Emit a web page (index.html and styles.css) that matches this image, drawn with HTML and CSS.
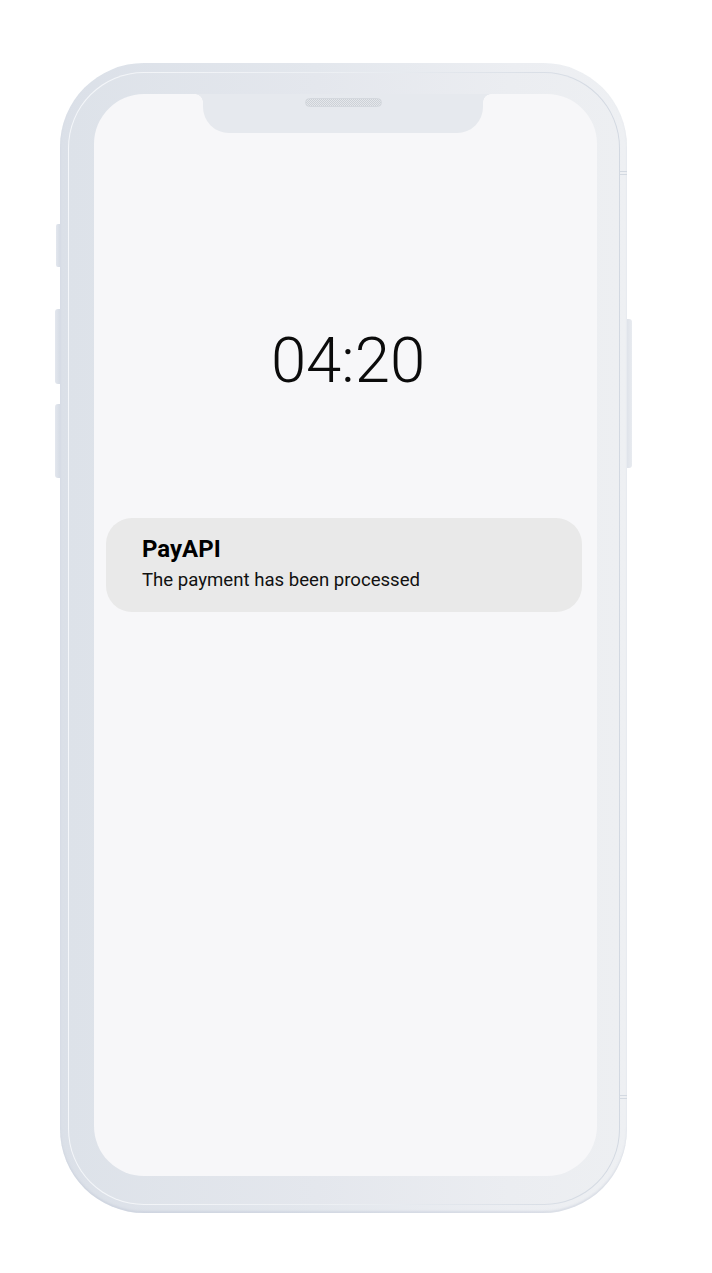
FILE: index.html
```html
<!DOCTYPE html>
<html lang="en">
<head>
<meta charset="utf-8">
<title>PayAPI notification</title>
<link rel="stylesheet" href="styles.css">
</head>
<body>
<div class="phone">
  <span class="side-btn btn-mute"></span>
  <span class="side-btn btn-vol-up"></span>
  <span class="side-btn btn-vol-down"></span>
  <span class="side-btn btn-power"></span>
  <span class="antenna antenna-top"></span>
  <span class="antenna antenna-bottom"></span>
  <div class="frame">
    <div class="ring"></div>
    <div class="screen">
      <div class="notch"><span class="speaker"></span></div>
      <div class="time">04:20</div>
      <div class="card">
        <div class="card-title">PayAPI</div>
        <div class="card-text">The payment has been processed</div>
      </div>
    </div>
  </div>
</div>
</body>
</html>
```

FILE: styles.css
```css
html, body {
  margin: 0;
  padding: 0;
  background: #ffffff;
}

body {
  font-family: Roboto, "Liberation Sans", sans-serif;
  width: 712px;
  height: 1273px;
  overflow: hidden;
}

.phone {
  position: relative;
  margin: 63px 0 0 60px;
  width: 567px;
  height: 1150px;
}

.frame {
  position: relative;
  box-sizing: border-box;
  width: 100%;
  height: 100%;
  border-radius: 84px;
  padding: 31px 30px 37px 34px;
  background: linear-gradient(90deg, #dbe0e8 0%, #e3e7ed 45%, #eceef2 80%, #eef0f3 100%);
  box-shadow: inset 0 -2px 2px rgba(180, 190, 205, 0.35);
}

.ring {
  position: absolute;
  top: 9px;
  right: 7px;
  bottom: 8px;
  left: 8px;
  border-radius: 76px;
  background: linear-gradient(90deg, #f5f7fa 0%, #eceff3 50%, #d2d8e1 100%);
}

.ring::after {
  content: "";
  position: absolute;
  inset: 1px;
  border-radius: 75px;
  background: linear-gradient(90deg, #dde2e9 0%, #e4e7ed 45%, #ebedf1 80%, #edeff2 100%);
}

.screen {
  position: relative;
  z-index: 1;
  box-sizing: border-box;
  height: 100%;
  border-radius: 50px;
  background: #f7f7f9;
  display: flex;
  flex-direction: column;
  align-items: flex-start;
  padding-top: 235px;
}

.notch {
  position: absolute;
  top: 0;
  left: 109px;
  width: 280px;
  height: 39px;
  background: #e6e9ee;
  border-radius: 0 0 26px 26px;
}

.notch::before,
.notch::after {
  content: "";
  position: absolute;
  top: 0;
  width: 8px;
  height: 8px;
}

.notch::before {
  left: -8px;
  background: radial-gradient(circle at 0 100%, transparent 7.5px, #e6e9ee 8px);
}

.notch::after {
  right: -8px;
  background: radial-gradient(circle at 100% 100%, transparent 7.5px, #e6e9ee 8px);
}

.speaker {
  position: absolute;
  top: 4px;
  left: 102px;
  width: 77px;
  height: 9px;
  box-sizing: border-box;
  border-radius: 5px;
  border: 1px solid #d4d8de;
  background-color: #e4e7eb;
  background-image:
    linear-gradient(45deg, #cdd1d7 25%, transparent 25%, transparent 75%, #cdd1d7 75%),
    linear-gradient(45deg, #cdd1d7 25%, transparent 25%, transparent 75%, #cdd1d7 75%);
  background-size: 2px 2px;
  background-position: 0 0, 1px 1px;
}

.time {
  align-self: center;
  margin-left: 5px;
  font-family: Roboto, "Liberation Sans", sans-serif;
  font-weight: 300;
  font-size: 63.5px;
  line-height: 1;
  color: #0b0b0b;
  letter-spacing: 0;
}

.card {
  box-sizing: border-box;
  margin: 125.5px 0 0 12px;
  width: 476px;
  height: 94px;
  border-radius: 26px;
  background: #e9e9e9;
  padding: 18px 0 0 36px;
  color: #000000;
}

.card-title {
  font-weight: 700;
  font-size: 24px;
  line-height: 26px;
}

.card-text {
  margin-top: 6px;
  font-weight: 400;
  font-size: 18.6px;
  line-height: 25px;
  color: #111111;
}

.side-btn {
  position: absolute;
  width: 4px;
  background: linear-gradient(90deg, #e3e7ee, #d6dce5);
}

.btn-mute {
  left: -4px;
  top: 161px;
  height: 43px;
  border-radius: 2px 0 0 2px;
}

.btn-vol-up {
  left: -5px;
  width: 5px;
  top: 246px;
  height: 75px;
  border-radius: 3px 0 0 3px;
}

.btn-vol-down {
  left: -5px;
  width: 5px;
  top: 341px;
  height: 74px;
  border-radius: 3px 0 0 3px;
}

.btn-power {
  right: -5px;
  width: 5px;
  top: 256px;
  height: 149px;
  border-radius: 0 3px 3px 0;
  background: linear-gradient(90deg, #dfe3ea, #e8ebf0);
}

.antenna {
  position: absolute;
  z-index: 2;
  right: 0;
  width: 8px;
  height: 4px;
  box-sizing: border-box;
  border-top: 1px solid #d3d9e1;
  border-bottom: 1px solid #d3d9e1;
}

.antenna-top {
  top: 108px;
}

.antenna-bottom {
  top: 1032px;
}
```
